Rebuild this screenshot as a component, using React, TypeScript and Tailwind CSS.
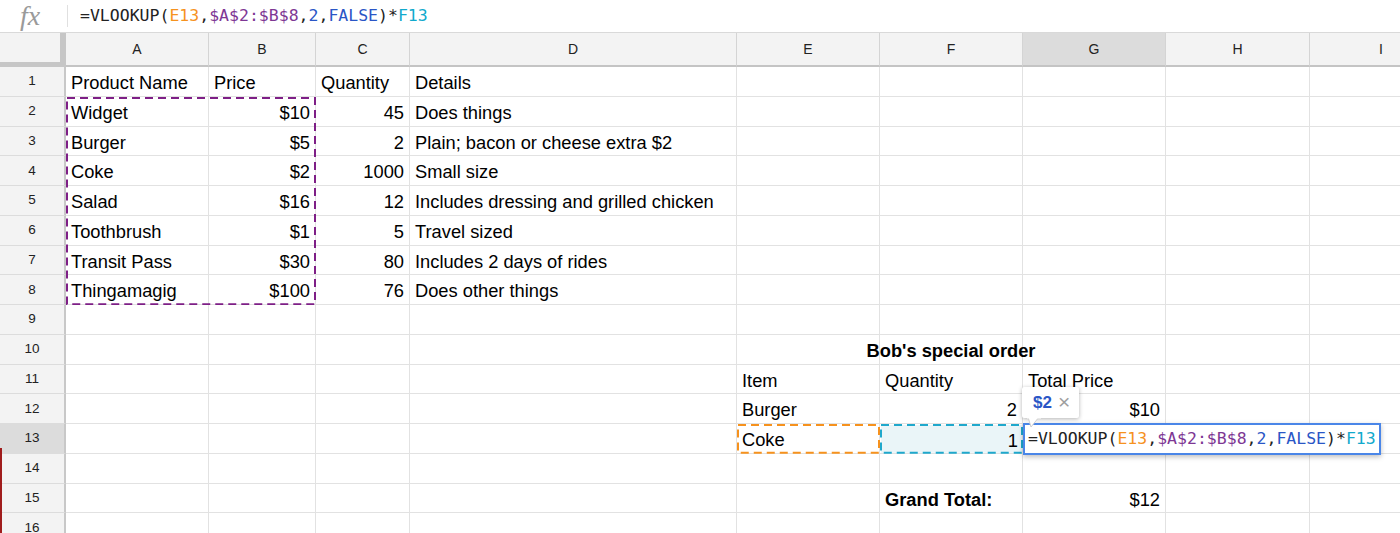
import React from "react"

type Cell = { t: string; align?: "r" | "c"; bold?: boolean }

const COLS = ["A", "B", "C", "D", "E", "F", "G", "H", "I"]
const WIDTHS = [143, 107, 94, 327, 143, 143, 143, 144, 143]
const ROW_H = 29.75
const HEAD_H = 34
const ROWS = 16

const data: Record<number, Record<string, Cell>> = {
  1: { A: { t: "Product Name" }, B: { t: "Price" }, C: { t: "Quantity" }, D: { t: "Details" } },
  2: { A: { t: "Widget" }, B: { t: "$10", align: "r" }, C: { t: "45", align: "r" }, D: { t: "Does things" } },
  3: { A: { t: "Burger" }, B: { t: "$5", align: "r" }, C: { t: "2", align: "r" }, D: { t: "Plain; bacon or cheese extra $2" } },
  4: { A: { t: "Coke" }, B: { t: "$2", align: "r" }, C: { t: "1000", align: "r" }, D: { t: "Small size" } },
  5: { A: { t: "Salad" }, B: { t: "$16", align: "r" }, C: { t: "12", align: "r" }, D: { t: "Includes dressing and grilled chicken" } },
  6: { A: { t: "Toothbrush" }, B: { t: "$1", align: "r" }, C: { t: "5", align: "r" }, D: { t: "Travel sized" } },
  7: { A: { t: "Transit Pass" }, B: { t: "$30", align: "r" }, C: { t: "80", align: "r" }, D: { t: "Includes 2 days of rides" } },
  8: { A: { t: "Thingamagig" }, B: { t: "$100", align: "r" }, C: { t: "76", align: "r" }, D: { t: "Does other things" } },
  10: { F: { t: "Bob's special order", align: "c", bold: true } },
  11: { E: { t: "Item" }, F: { t: "Quantity" }, G: { t: "Total Price" } },
  12: { E: { t: "Burger" }, F: { t: "2", align: "r" }, G: { t: "$10", align: "r" } },
  13: { E: { t: "Coke" }, F: { t: "1", align: "r" } },
  15: { F: { t: "Grand Total:", bold: true }, G: { t: "$12", align: "r" } },
}

const colLeft = (i: number) => 66 + WIDTHS.slice(0, i).reduce((a, b) => a + b, 0)
const rowTop = (n: number) => HEAD_H + (n - 1) * ROW_H

function Formula() {
  return (
    <>
      <span>=VLOOKUP(</span>
      <span className="text-[#f6921e]">E13</span>
      <span>,</span>
      <span className="text-[#7e3794]">$A$2:$B$8</span>
      <span>,</span>
      <span className="text-[#2a56c6]">2</span>
      <span>,</span>
      <span className="text-[#2a56c6]">FALSE</span>
      <span>)*</span>
      <span className="text-[#11a9cc]">F13</span>
    </>
  )
}

function Dashed({ left, top, w, h, color, fill }: { left: number; top: number; w: number; h: number; color: string; fill?: string }) {
  return (
    <svg className="absolute pointer-events-none" style={{ left, top }} width={w} height={h}>
      <rect x={1} y={1} width={w - 2} height={h - 2} fill={fill ?? "none"} stroke={color} strokeWidth={2} strokeDasharray="8 5" />
    </svg>
  )
}

export default function App() {
  return (
    <div className="w-[1400px] h-[533px] overflow-hidden bg-white text-black font-['Liberation_Sans',Arial,sans-serif]">
      {/* formula bar */}
      <div className="h-[33px] flex items-center border-b border-[#d9d9d9]">
        <div className="w-[67px] h-full flex items-center pl-[20px]">
          <span className="font-['Liberation_Serif',serif] italic text-[28px] leading-[32px] text-[#9a9a9a]">fx</span>
        </div>
        <div className="w-px h-[22px] bg-[#e0e0e0]" />
        <div className="pl-[12px] font-['DejaVu_Sans_Mono',monospace] text-[16.5px] text-[#222] whitespace-nowrap">
          <Formula />
        </div>
      </div>

      {/* grid */}
      <div className="relative">
        {/* column headers */}
        <div className="flex h-[34px]">
          <div className="w-[66px] shrink-0 bg-[#f3f3f3] border-r-[6px] border-b-[5px] border-[#c6c6c6]" />
          {COLS.map((c, i) => (
            <div
              key={c}
              style={{ width: WIDTHS[i] }}
              className={
                "shrink-0 flex items-center justify-center text-[14px] text-[#222] border-r border-[#d4d4d4] border-b-2 border-b-[#c4c4c4] " +
                (c === "G" ? "bg-[#dcdcdc]" : "bg-[#f3f3f3]")
              }
            >
              {c}
            </div>
          ))}
        </div>

        {/* rows */}
        {Array.from({ length: ROWS }, (_, r) => r + 1).map(n => (
          <div key={n} className="flex h-[29.75px]">
            <div
              className={
                "w-[66px] shrink-0 flex items-center justify-center text-[13.5px] text-[#222] border-r-2 border-[#c8c8c8] border-b border-b-[#dcdcdc] " +
                (n === 13 ? "bg-[#dcdcdc]" : "bg-[#f3f3f3]")
              }
            >
              {n}
            </div>
            {COLS.map((c, i) => {
              const cell = data[n]?.[c]
              return (
                <div
                  key={c}
                  style={{ width: WIDTHS[i] }}
                  className={
                    "shrink-0 flex items-center px-[5px] pt-[3px] text-[18.3px] whitespace-nowrap border-r border-b border-[#e2e2e2] " +
                    (cell?.align === "r" ? "justify-end " : cell?.align === "c" ? "justify-center " : "justify-start ") +
                    (cell?.bold ? "font-bold" : "")
                  }
                >
                  {cell?.t}
                </div>
              )
            })}
          </div>
        ))}

        {/* copy/reference ranges */}
        <Dashed left={colLeft(0)} top={rowTop(2)} w={250} h={7 * ROW_H} color="#7e1f86" />
        <Dashed left={colLeft(4)} top={rowTop(13)} w={143} h={ROW_H} color="#f6921e" />
        <Dashed left={colLeft(5)} top={rowTop(13)} w={143} h={ROW_H} color="#1fa8cc" fill="#eaf5f8" />
        <div
          className="absolute flex items-center justify-end pr-[5px] pt-[3px] text-[18.3px]"
          style={{ left: colLeft(5), top: rowTop(13), width: 143, height: ROW_H }}
        >
          1
        </div>

        {/* in-cell editor */}
        <div
          className="absolute bg-white border-2 border-[#4a86e8] shadow-[0_2px_5px_rgba(0,0,0,0.25)] flex items-center pl-[3px] pt-[1px] font-['DejaVu_Sans_Mono',monospace] text-[16.5px] text-[#222] whitespace-nowrap"
          style={{ left: colLeft(6), top: rowTop(13) - 1, width: 358, height: 32 }}
        >
          <Formula />
        </div>

        {/* tooltip */}
        <div className="absolute left-[1022px] top-[354px] w-[57px] h-[31px] bg-white rounded-[2px] shadow-[0_1px_4px_rgba(0,0,0,0.3)] flex items-center gap-[6px] pl-[11px]">
          <span className="text-[17px] font-bold text-[#2a56c6]">$2</span>
          <span className="text-[21px] text-[#9e9e9e] leading-none -mt-[2px]">×</span>
        </div>
        <svg className="absolute left-[1027px] top-[384px]" width={14} height={12}>
          <polygon points="1,0 12,0 4,10" fill="white" stroke="#cfcfcf" strokeWidth={1} />
          <rect x={0} y={0} width={14} height={1.5} fill="white" />
        </svg>

        {/* red edge marker */}
        <div className="absolute left-0 top-[415px] w-[2px] h-[100px] bg-[#a01c1c]" />
      </div>
    </div>
  )
}
